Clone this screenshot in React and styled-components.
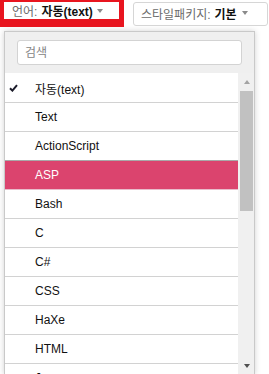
import React from "react";
import styled, { createGlobalStyle } from "styled-components";

const GlobalStyle = createGlobalStyle`
  html, body {
    margin: 0;
    padding: 0;
    background: #fff;
    overflow: hidden;
    height: 374px;
  }
  body {
    font-family: "Liberation Sans", "Noto Sans CJK KR", sans-serif;
    font-size: 12px;
    color: #111;
  }
`;

const Toolbar = styled.div`
  display: flex;
  align-items: flex-start;
  gap: 9px;
  height: 27px;
`;

const LangButton = styled.div`
  box-sizing: border-box;
  width: 124px;
  height: 27px;
  border-style: solid;
  border-color: #e8151f;
  border-width: 2px 5px 8px 4px;
  background: #fff;
  padding: 3px 0 0 8px;
  line-height: 15px;
  display: flex;
  align-items: flex-start;
  white-space: nowrap;
`;

const StyleButton = styled.div`
  box-sizing: border-box;
  margin-top: 2px;
  width: 135px;
  height: 24px;
  border: 1px solid #d6d6d6;
  border-radius: 3px;
  background: #fff;
  padding: 0 0 2px 7px;
  display: flex;
  align-items: center;
  white-space: nowrap;
`;

const Label = styled.span`
  color: #6b6b6b;
  margin-right: 4px;
`;

const Value = styled.span`
  font-weight: bold;
  color: #111;
`;

const Caret = styled.span`
  display: inline-block;
  align-self: center;
  width: 0;
  height: 0;
  border-left: 3.5px solid transparent;
  border-right: 3.5px solid transparent;
  border-top: 4px solid #8a8a8a;
  margin-left: ${(p) => p.$gap}px;
  margin-top: ${(p) => p.$shift || 0}px;
`;

const Panel = styled.div`
  box-sizing: border-box;
  margin: 4px 0 0 4px;
  width: 251px;
  border: 1px solid #c9c9c9;
  border-bottom: none;
  background: #efefef;
  box-shadow: 0 0 6px rgba(0, 0, 0, 0.18);
`;

const SearchWrap = styled.div`
  padding: 8px 12px;
`;

const SearchInput = styled.input`
  box-sizing: border-box;
  display: block;
  width: 100%;
  height: 25px;
  margin: 0;
  border: 1px solid #d3d3d3;
  border-radius: 3px;
  padding: 0 7px;
  background: #fff;
  font-family: inherit;
  font-size: 12px;
  color: #111;
  outline: none;
  &::placeholder {
    color: #858585;
  }
`;

const List = styled.div`
  display: flex;
  height: 302px;
  background: #fff;
`;

const Items = styled.div`
  flex: 1;
  padding-top: 1px;
  overflow: hidden;
`;

const Row = styled.div`
  display: flex;
  align-items: center;
  height: 28px;
  padding-left: 4px;
  border-bottom: 1px solid ${(p) => (p.$active ? "#e9bccb" : "#d2d2d2")};
  background: ${(p) => (p.$active ? "#db446e" : "#fff")};
  color: ${(p) => (p.$active ? "#fff" : "#111")};
  box-shadow: ${(p) => (p.$active ? "0 -1px 0 #a9a9a9" : "none")};
  white-space: nowrap;
`;

const CheckCell = styled.span`
  flex: none;
  width: 26px;
  display: flex;
  align-items: center;
`;

const Scrollbar = styled.div`
  flex: none;
  width: 16px;
  background: #f0f0f0;
  display: flex;
  flex-direction: column;
`;

const ScrollArrow = styled.div`
  height: 18px;
  display: flex;
  align-items: center;
  justify-content: center;
  padding-left: 1px;
`;

const Triangle = styled.span`
  width: 0;
  height: 0;
  border-left: 3.5px solid transparent;
  border-right: 3.5px solid transparent;
  ${(p) =>
    p.$up
      ? "border-bottom: 4px solid #a3a3a3;"
      : "border-top: 4px solid #505050;"}
`;

const Thumb = styled.div`
  margin-left: 2px;
  width: 13px;
  height: 120px;
  background: #c1c1c1;
`;

const Track = styled.div`
  flex: 1;
`;

const languages = [
  "자동(text)",
  "Text",
  "ActionScript",
  "ASP",
  "Bash",
  "C",
  "C#",
  "CSS",
  "HaXe",
  "HTML",
  "Java",
  "JavaScript",
];

function Check() {
  return (
    <svg width="9" height="8" viewBox="0 0 9 8">
      <path
        d="M1 4.2 L3.4 6.6 L8 1.2"
        fill="none"
        stroke="#1b1b2a"
        strokeWidth="2"
      />
    </svg>
  );
}

export default function App() {
  return (
    <>
      <GlobalStyle />
      <Toolbar>
        <LangButton>
          <Label>언어:</Label>
          <Value>자동(text)</Value>
          <Caret $gap={4} $shift={-2} />
        </LangButton>
        <StyleButton>
          <Label>스타일패키지:</Label>
          <Value>기본</Value>
          <Caret $gap={5} />
        </StyleButton>
      </Toolbar>
      <Panel>
        <SearchWrap>
          <SearchInput placeholder="검색" />
        </SearchWrap>
        <List>
          <Items>
            {languages.map((name, i) => (
              <Row key={name} $active={name === "ASP"}>
                <CheckCell>{i === 0 && <Check />}</CheckCell>
                {name}
              </Row>
            ))}
          </Items>
          <Scrollbar>
            <ScrollArrow>
              <Triangle $up />
            </ScrollArrow>
            <Thumb />
            <Track />
            <ScrollArrow>
              <Triangle />
            </ScrollArrow>
          </Scrollbar>
        </List>
      </Panel>
    </>
  );
}
